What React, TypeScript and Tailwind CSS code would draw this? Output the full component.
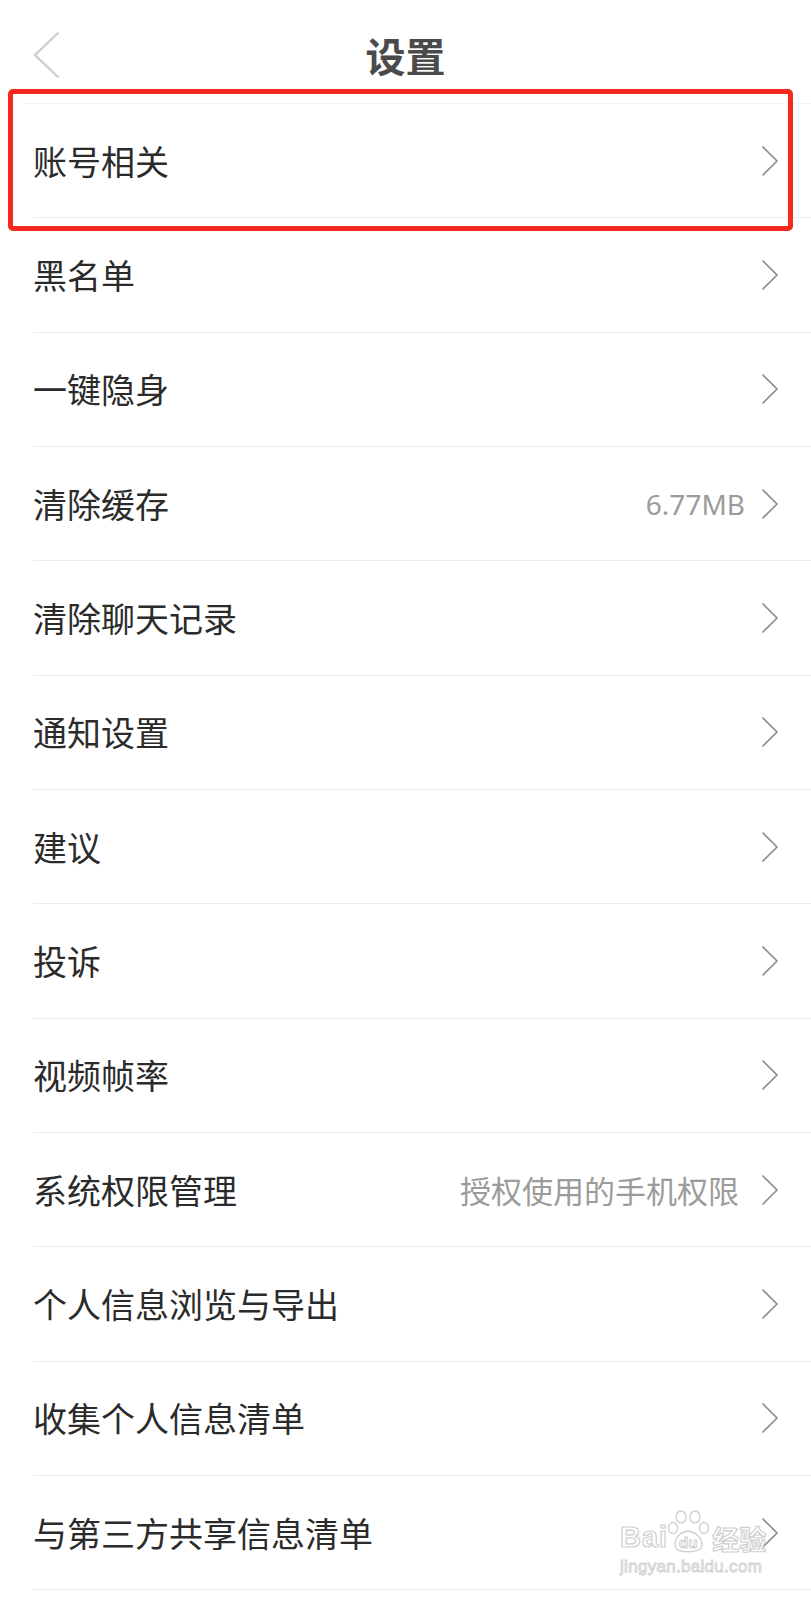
const ITEMS: { label: string; value?: string; mono?: boolean }[] = [
  { label: "账号相关" },
  { label: "黑名单" },
  { label: "一键隐身" },
  { label: "清除缓存", value: "6.77MB", mono: true },
  { label: "清除聊天记录" },
  { label: "通知设置" },
  { label: "建议" },
  { label: "投诉" },
  { label: "视频帧率" },
  { label: "系统权限管理", value: "授权使用的手机权限" },
  { label: "个人信息浏览与导出" },
  { label: "收集个人信息清单" },
  { label: "与第三方共享信息清单" },
];

const CJK = "font-['Noto_Sans_CJK_SC','Noto_Sans',sans-serif]";

function Chevron() {
  return (
    <svg width="18" height="32" viewBox="0 0 18 32" fill="none" className="shrink-0">
      <path d="M1.5 1.5 L16 16 L1.5 30.5" stroke="#8c8c8c" strokeWidth="1.6" strokeLinejoin="miter" />
    </svg>
  );
}

function Watermark() {
  return (
    <div className="pointer-events-none absolute left-[620px] top-[1510px] flex flex-col items-start">
      <div className="flex items-end">
        <span className="font-['Liberation_Sans',sans-serif] text-[29px] font-bold leading-none tracking-[1px] text-white [-webkit-text-stroke:1.2px_#cfcfcf]">
          Bai
        </span>
        <svg width="42" height="44" viewBox="0 0 42 44" fill="none" className="-mb-[2px]">
          <g stroke="#cfcfcf" strokeWidth="1.4" fill="#fff">
            <ellipse cx="13" cy="7" rx="5" ry="6" />
            <ellipse cx="27" cy="7" rx="5" ry="6" />
            <ellipse cx="5" cy="18" rx="4.5" ry="5.5" />
            <ellipse cx="36" cy="18" rx="4.5" ry="5.5" />
            <path d="M8 38 C4 30 12 22 20 21 C28 22 37 30 33 38 C30 43 10 43 8 38 Z" />
          </g>
          <text x="11" y="38" fontFamily="Liberation Sans, sans-serif" fontSize="15" fontWeight="700" fill="#fff" stroke="#cfcfcf" strokeWidth="1">
            du
          </text>
        </svg>
        <span className={`${CJK} ml-[2px] text-[27px] font-bold leading-none text-white [-webkit-text-stroke:1.2px_#cfcfcf]`}>
          经验
        </span>
      </div>
      <span className="mt-[6px] font-['Liberation_Sans',sans-serif] text-[17px] leading-none tracking-[0.3px] text-white [-webkit-text-stroke:0.9px_#cfcfcf]">
        jingyan.baidu.com
      </span>
    </div>
  );
}

export default function App() {
  return (
    <div className={`relative h-[1600px] w-[811px] overflow-hidden bg-white ${CJK}`}>
      <header className="grid h-[103px] grid-cols-[1fr_auto_1fr] items-center pt-[6px]">
        <div className="pl-[33px]">
          <svg width="27" height="48" viewBox="0 0 27 48" fill="none">
            <path d="M25.5 1.5 L2 24 L25.5 46.5" stroke="#cfcfcf" strokeWidth="2.4" />
          </svg>
        </div>
        <h1 className="text-[40px] font-bold leading-none text-[#4a4a4a]">设置</h1>
        <div />
      </header>

      <ul className="ml-[22px] border-t border-[#f4f4f6]">
        {ITEMS.map((item) => (
          <li key={item.label} className="ml-[11px] flex h-[114.33px] items-center border-b border-[#ebebeb] pr-[32px]">
            <span className="flex-1 text-[34px] leading-none text-[#2b2b2b]">{item.label}</span>
            {item.value && (
              <span
                className={
                  item.mono
                    ? "mr-[16px] font-['Noto_Sans',sans-serif] text-[28px] leading-none text-[#9b9b9b]"
                    : "mr-[22px] text-[31px] leading-none text-[#9b9b9b]"
                }
              >
                {item.value}
              </span>
            )}
            <Chevron />
          </li>
        ))}
      </ul>

      <div className="pointer-events-none absolute left-[8px] top-[89px] h-[142px] w-[785px] rounded-[5px] border-[5px] border-[#f7291e]" />

      <Watermark />
    </div>
  );
}
